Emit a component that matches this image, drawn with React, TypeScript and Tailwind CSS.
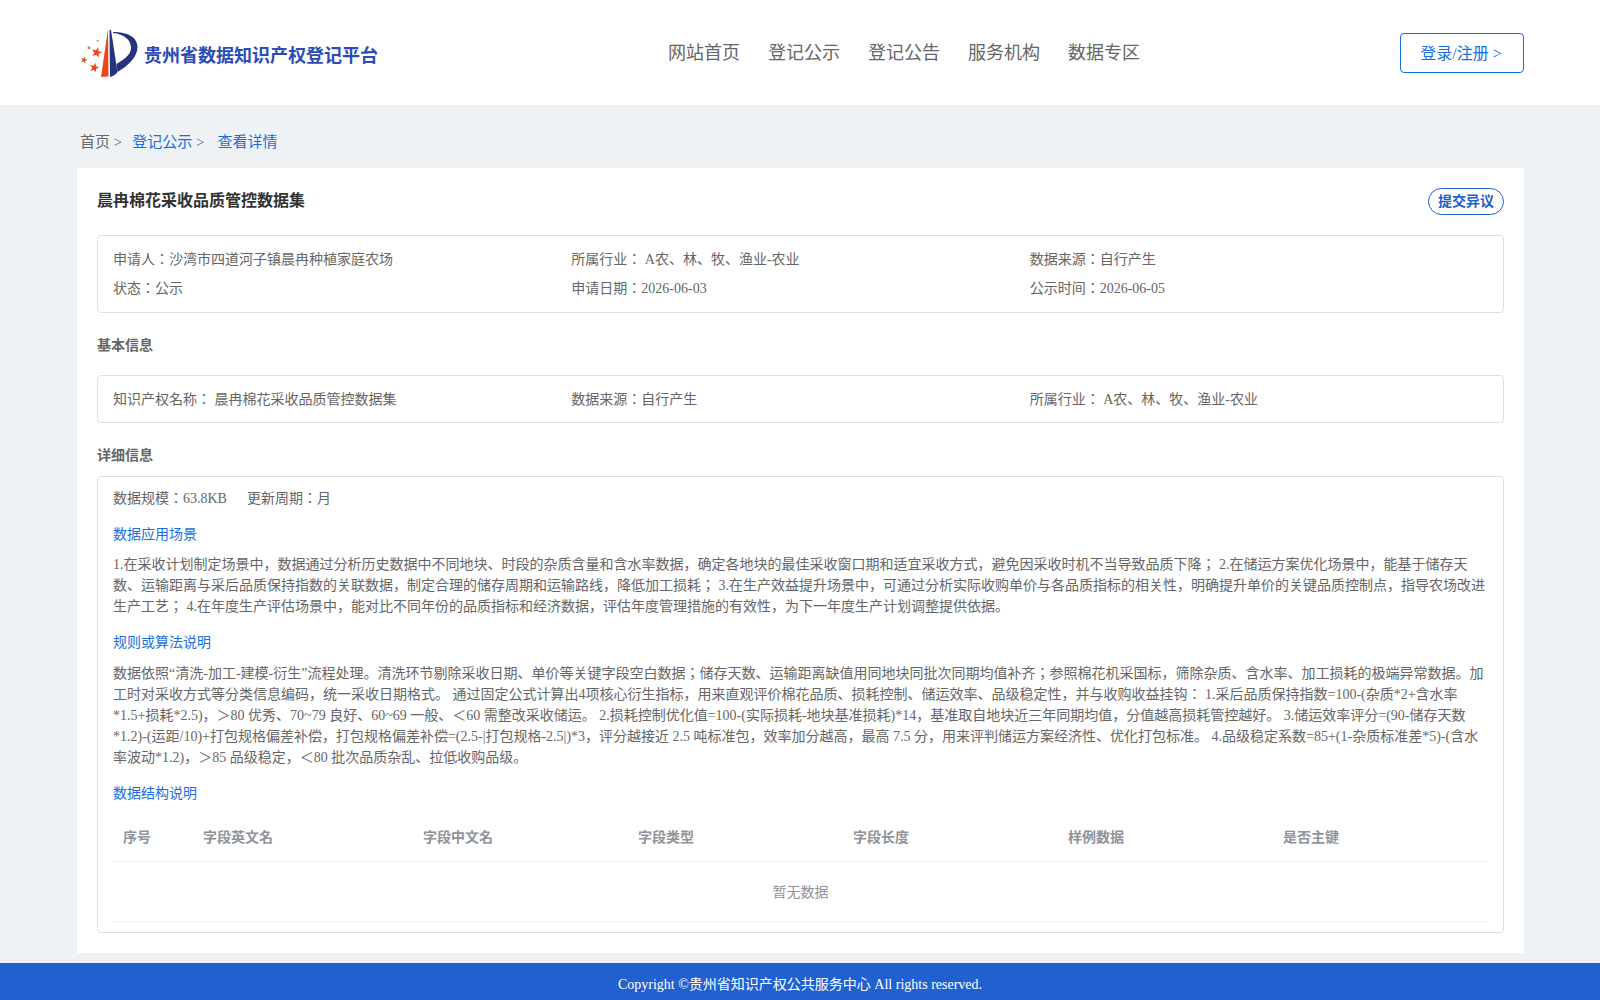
const fields = ["序号", "字段英文名", "字段中文名", "字段类型", "字段长度", "样例数据", "是否主键"];

const navItems = ["网站首页", "登记公示", "登记公告", "服务机构", "数据专区"];

function Star({ cx, cy, r }: { cx: number; cy: number; r: number }) {
  const pts = [];
  for (let i = 0; i < 10; i++) {
    const rad = i % 2 === 0 ? r : r * 0.42;
    const a = (Math.PI / 5) * i - Math.PI / 2 + 0.25;
    pts.push(`${cx + rad * Math.cos(a)},${cy + rad * Math.sin(a)}`);
  }
  return <polygon points={pts.join(" ")} fill="#e8491d" />;
}

function Logo() {
  return (
    <svg width="62" height="54" viewBox="78 26 62 54" className="ml-[-2px] shrink-0">
      <path d="M108 29 L101 77 L108.500 76.500 Z" fill="#e8491d" />
      <path d="M109.500 30 L110 77 C113 76 115.500 75 117.500 72 L111 30 Z" fill="#26337f" />
      <path d="M113 32 C127 32 137.500 37 137.500 47 C137.500 57 128 66 117.500 72 L116.500 64 C125 59 131.500 54 131 47 C130.500 39 123 34 113 33 Z" fill="#26337f" />
      <Star cx={96.700} cy={52.500} r={5.500} />
      <Star cx={84} cy={60} r={3.500} />
      <Star cx={94.300} cy={67.700} r={5} />
      <circle cx="89" cy="47.700" r="1.500" fill="#ee7a55" />
      <circle cx="97.700" cy="40.700" r="1" fill="#ee7a55" />
    </svg>
  );
}

export default function App() {
  return (
    <div className="min-h-[1000px] bg-[#eff2f5] font-['Liberation_Serif','Noto_Sans_CJK_JP',serif] text-sm text-[#666] [text-spacing-trim:space-all]">
      <header className="flex h-[105px] items-center justify-between bg-white pr-[76px] pl-[80px]">
        <div className="flex w-[300px] items-center">
          <Logo />
          <span className="mt-[6px] ml-[4px] text-lg font-bold text-[#2b4cb5]">贵州省数据知识产权登记平台</span>
        </div>
        <nav className="ml-[28px] flex gap-[28px] text-lg text-[#666]">
          {navItems.map((item) => (
            <span key={item}>{item}</span>
          ))}
        </nav>
        <button className="h-10 w-[124px] rounded border border-[#1a6fe0] bg-white pt-[3px] pr-[2px] text-base text-[#1a6fe0]">
          登录/注册 &gt;
        </button>
      </header>

      <div className="flex h-[63px] items-center pt-[12px] pl-[80px] text-[15px]">
        <span>首页 &gt;</span>
        <span className="ml-[10px] text-[#1a6fe0]">登记公示 &gt;</span>
        <span className="ml-[13px] text-[#1a6fe0]">查看详情</span>
      </div>

      <main className="mr-[76px] ml-[77px] h-[785px] bg-white px-5 pt-5">
        <div className="flex h-[27px] items-start justify-between">
          <h1 className="text-base leading-[26px] font-bold text-[#333]">晨冉棉花采收品质管控数据集</h1>
          <button className="h-[27px] w-[76px] rounded-[14px] border border-[#2160cf] text-sm font-bold text-[#2160cf]">
            提交异议
          </button>
        </div>

        <div className="mt-5 grid h-[78px] grid-cols-3 content-start gap-y-2 rounded border border-[#dcdfe6] px-[15px] pt-[13px] leading-[21px]">
          <span>申请人：沙湾市四道河子镇晨冉种植家庭农场</span>
          <span>所属行业： A农、林、牧、渔业-农业</span>
          <span>数据来源：自行产生</span>
          <span>状态：公示</span>
          <span>申请日期：2026-06-03</span>
          <span>公示时间：2026-06-05</span>
        </div>

        <h2 className="mt-[22px] text-sm leading-[21px] font-bold text-[#666]">基本信息</h2>

        <div className="mt-[19px] grid h-[48px] grid-cols-3 items-center rounded border border-[#dcdfe6] px-[15px] leading-[21px]">
          <span>知识产权名称： 晨冉棉花采收品质管控数据集</span>
          <span>数据来源：自行产生</span>
          <span>所属行业： A农、林、牧、渔业-农业</span>
        </div>

        <h2 className="mt-[22px] text-sm leading-[21px] font-bold text-[#666]">详细信息</h2>

        <div className="mt-[10px] h-[457px] rounded border border-[#dcdfe6] px-[15px] pt-[11px] leading-[21px]">
          <div className="flex gap-5">
            <span>数据规模：63.8KB</span>
            <span>更新周期：月</span>
          </div>
          <h3 className="mt-[15px] text-[#1a6fe0]">数据应用场景</h3>
          <p className="mt-[9px]">
            1.在采收计划制定场景中，数据通过分析历史数据中不同地块、时段的杂质含量和含水率数据，确定各地块的最佳采收窗口期和适宜采收方式，避免因采收时机不当导致品质下降； 2.在储运方案优化场景中，能基于储存天数、运输距离与采后品质保持指数的关联数据，制定合理的储存周期和运输路线，降低加工损耗； 3.在生产效益提升场景中，可通过分析实际收购单价与各品质指标的相关性，明确提升单价的关键品质控制点，指导农场改进生产工艺； 4.在年度生产评估场景中，能对比不同年份的品质指标和经济数据，评估年度管理措施的有效性，为下一年度生产计划调整提供依据。
          </p>
          <h3 className="mt-[15px] text-[#1a6fe0]">规则或算法说明</h3>
          <p className="mt-[10px]">
            数据依照“清洗-加工-建模-衍生”流程处理。清洗环节剔除采收日期、单价等关键字段空白数据；储存天数、运输距离缺值用同地块同批次同期均值补齐；参照棉花机采国标，筛除杂质、含水率、加工损耗的极端异常数据。加工时对采收方式等分类信息编码，统一采收日期格式。 通过固定公式计算出4项核心衍生指标，用来直观评价棉花品质、损耗控制、储运效率、品级稳定性，并与收购收益挂钩： 1.采后品质保持指数=100-(杂质*2+含水率*1.5+损耗*2.5)，＞80 优秀、70~79 良好、60~69 一般、＜60 需整改采收储运。 2.损耗控制优化值=100-(实际损耗-地块基准损耗)*14，基准取自地块近三年同期均值，分值越高损耗管控越好。 3.储运效率评分=(90-储存天数*1.2)-(运距/10)+打包规格偏差补偿，打包规格偏差补偿=(2.5-|打包规格-2.5|)*3，评分越接近 2.5 吨标准包，效率加分越高，最高 7.5 分，用来评判储运方案经济性、优化打包标准。 4.品级稳定系数=85+(1-杂质标准差*5)-(含水率波动*1.2)，＞85 品级稳定，＜80 批次品质杂乱、拉低收购品级。
          </p>
          <h3 className="mt-[15px] text-[#1a6fe0]">数据结构说明</h3>
          <div className="mt-[6px] grid h-[52px] grid-cols-[80px_220px_repeat(5,1fr)] items-center border-b border-[#ebeef5] pt-[4px] font-bold text-[#909399]">
            {fields.map((f) => (
              <span key={f} className="px-[10px]">{f}</span>
            ))}
          </div>
          <div className="flex h-[60px] items-center justify-center border-b border-[#ebeef5] pt-[2px] text-[#909399]">暂无数据</div>
        </div>
      </main>

      <footer className="mt-[10px] flex h-[37px] items-center justify-center bg-[#2160cf] pt-[6px] text-sm text-white">
        Copyright ©贵州省知识产权公共服务中心 All rights reserved.
      </footer>
    </div>
  );
}
